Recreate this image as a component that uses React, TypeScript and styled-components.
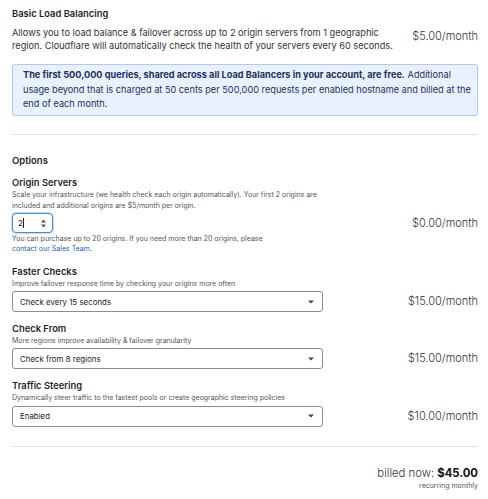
import React from 'react';
import styled, { createGlobalStyle } from 'styled-components';

const GlobalStyle = createGlobalStyle`
    html, body {
        margin: 0;
        padding: 0;
        background: #ffffff;
    }
    body {
        font-family: 'Inter', 'Liberation Sans', sans-serif;
        color: #222;
    }
`;

const Page = styled.div`
    width: 488px;
    box-sizing: border-box;
    padding: 7px 10px 0 12px;
`;

const SectionTitle = styled.div`
    font-size: 9.4px;
    font-weight: 600;
    line-height: 14px;
    color: #1f1f1f;
`;

const DescRow = styled.div`
    display: flex;
    justify-content: space-between;
    align-items: flex-start;
    margin-top: 6px;
`;

const Desc = styled.div`
    width: 385px;
    font-size: 9.2px;
    line-height: 12.7px;
    color: #333;
`;

const Price = styled.div<{ $offset?: number }>`
    font-size: 11px;
    font-weight: 300;
    line-height: 15px;
    color: #333;
    white-space: nowrap;
    margin-top: ${(p) => p.$offset ?? 0}px;
`;

const InfoBox = styled.div`
    margin-top: 11.5px;
    padding: 3.5px 4px 3.5px 10px;
    background: #e8f2fe;
    border: 1px solid #a8cbf7;
    border-radius: 3px;
    font-size: 9.2px;
    line-height: 14.3px;
    color: #1e2f5e;

    strong {
        font-weight: 700;
    }
`;

const Divider = styled.div`
    height: 1px;
    background: #e2e2e2;
    margin-top: 18.5px;
`;

const OptionsTitle = styled(SectionTitle)`
    margin-top: 19px;
    font-size: 9.5px;
`;

const OptionList = styled.div`
    display: flex;
    flex-direction: column;
    gap: 10px;
    margin-top: 8px;
`;

const Option = styled.div`
    display: flex;
    flex-direction: column;
`;

const OptionLabel = styled.div`
    font-size: 9.4px;
    font-weight: 600;
    line-height: 13px;
    color: #1f1f1f;
`;

const Help = styled.div`
    max-width: 322px;
    font-size: 7px;
    line-height: 11px;
    color: #555;
`;

const ControlRow = styled.div`
    display: flex;
    justify-content: space-between;
    align-items: center;
    margin-top: 2.2px;
`;

const Note = styled.div`
    max-width: 270px;
    margin-top: 0.5px;
    font-size: 7px;
    line-height: 10.5px;
    color: #555;

    a {
        color: #1d5fbf;
        text-decoration: none;
    }
`;

const NumberBox = styled.div`
    width: 41px;
    height: 20px;
    box-sizing: border-box;
    display: flex;
    align-items: center;
    justify-content: space-between;
    padding: 0 6px 0 5px;
    border: 1.5px solid #4a86e8;
    border-radius: 4px;
    box-shadow: 0 0 0 1px #c9dcfa;
    background: #fff;
    font-size: 8px;
    color: #222;
`;

const Value = styled.span`
    display: flex;
    align-items: center;

    &::after {
        content: '';
        width: 1px;
        height: 10px;
        background: #222;
    }
`;

const SelectBox = styled.div`
    width: 311px;
    height: 21px;
    box-sizing: border-box;
    display: flex;
    align-items: center;
    justify-content: space-between;
    padding: 0 8px 0 7px;
    border: 1px solid #8d8d8d;
    border-radius: 3px;
    background: #fff;
    font-size: 7.9px;
    color: #222;
`;

const Summary = styled.div`
    display: flex;
    flex-direction: column;
    align-items: flex-end;
    margin-top: 19px;
    padding-top: 19px;
    border-top: 1px solid #e2e2e2;
`;

const Billed = styled.div`
    font-size: 11.3px;
    font-weight: 300;
    line-height: 15px;
    color: #333;

    strong {
        font-weight: 700;
        color: #111;
    }
`;

const Recurring = styled.div`
    font-size: 7px;
    line-height: 10px;
    color: #555;
`;

const Caret = () => (
    <svg width="6" height="4" viewBox="0 0 6 4">
        <path d="M0 0.5 L6 0.5 L3 3.5 Z" fill="#444" />
    </svg>
);

const Spinner = () => (
    <svg width="5" height="9" viewBox="0 0 5 9">
        <path d="M0 3.5 L2.5 0.5 L5 3.5 Z" fill="#555" />
        <path d="M0 5.5 L2.5 8.5 L5 5.5 Z" fill="#555" />
    </svg>
);

type SelectOption = {
    label: string;
    help: string;
    value: string;
    price: string;
};

const selects: SelectOption[] = [
    {
        label: 'Faster Checks',
        help: 'Improve failover response time by checking your origins more often',
        value: 'Check every 15 seconds',
        price: '$15.00/month',
    },
    {
        label: 'Check From',
        help: 'More regions improve availability & failover granularity',
        value: 'Check from 8 regions',
        price: '$15.00/month',
    },
    {
        label: 'Traffic Steering',
        help: 'Dynamically steer traffic to the fastest pools or create geographic steering policies',
        value: 'Enabled',
        price: '$10.00/month',
    },
];

const App = () => {
    return (
        <Page>
            <GlobalStyle />
            <SectionTitle>Basic Load Balancing</SectionTitle>
            <DescRow>
                <Desc>
                    Allows you to load balance &amp; failover across up to 2
                    origin servers from 1 geographic region. Cloudflare will
                    automatically check the health of your servers every 60
                    seconds.
                </Desc>
                <Price $offset={2}>$5.00/month</Price>
            </DescRow>
            <InfoBox>
                <strong>
                    The first 500,000 queries, shared across all Load
                    Balancers in your account, are free.
                </strong>{' '}
                Additional usage beyond that is charged at 50 cents per
                500,000 requests per enabled hostname and billed at the end of
                each month.
            </InfoBox>
            <Divider />
            <OptionsTitle>Options</OptionsTitle>
            <OptionList>
                <Option>
                    <OptionLabel>Origin Servers</OptionLabel>
                    <Help>
                        Scale your infrastructure (we health check each origin
                        automatically). Your first 2 origins are included and
                        additional origins are $5/month per origin.
                    </Help>
                    <ControlRow>
                        <NumberBox>
                            <Value>2</Value>
                            <Spinner />
                        </NumberBox>
                        <Price>$0.00/month</Price>
                    </ControlRow>
                    <Note>
                        You can purchase up to 20 origins. If you need more
                        than 20 origins, please <a href="#">contact our Sales Team</a>.
                    </Note>
                </Option>
                {selects.map((s) => (
                    <Option key={s.label}>
                        <OptionLabel>{s.label}</OptionLabel>
                        <Help>{s.help}</Help>
                        <ControlRow>
                            <SelectBox>
                                <span>{s.value}</span>
                                <Caret />
                            </SelectBox>
                            <Price>{s.price}</Price>
                        </ControlRow>
                    </Option>
                ))}
            </OptionList>
            <Summary>
                <Billed>
                    billed now: <strong>$45.00</strong>
                </Billed>
                <Recurring>recurring monthly</Recurring>
            </Summary>
        </Page>
    );
};

export default App;
